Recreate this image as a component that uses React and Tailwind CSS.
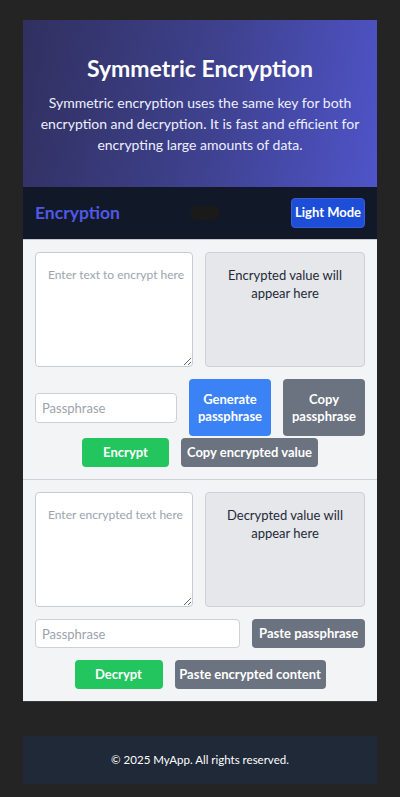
import React from "react";

const font = { fontFamily: 'Lato, "Noto Sans", sans-serif' };

export default function App() {
  return (
    <div className="min-h-screen bg-[#242424] px-[23px] pt-5 pb-[13px] flex flex-col" style={font}>
      <header className="bg-[linear-gradient(100deg,#30305f_0%,#3f4290_55%,#4f54c9_100%)] h-[167px] flex flex-col items-center justify-center px-3 text-center">
        <h1 className="text-[23px] leading-[30px] font-bold text-white">Symmetric Encryption</h1>
        <p className="mt-[9px] text-[14px] leading-[21px] text-[#eef0ff]">
          Symmetric encryption uses the same key for both encryption and decryption. It is fast and efficient for encrypting large amounts of data.
        </p>
      </header>

      <nav className="bg-[#111827] h-[52px] flex items-center justify-between px-3">
        <span className="text-[17.5px] font-bold text-[#5058e6]">Encryption</span>
        <div className="w-[30px] h-[14px] rounded-lg bg-[#1a1a1a]"></div>
        <button className="h-[30px] w-[74px] rounded bg-[#1d4ed8] border border-[#3b5bdb] text-white text-[13px] font-bold whitespace-nowrap">Light Mode</button>
      </nav>

      <main className="bg-[#f3f4f6] border-b border-[#3a3a3a]">
        <section className="p-3 border-t border-[#c7c9d1] border-b border-b-[#cfd1d6]">
          <div className="grid grid-cols-[158px_160px] gap-3">
            <textarea
              className="h-[115px] bg-white border border-[#c9cbd2] rounded pl-3 pr-1 py-3 text-[12px] leading-[20px] resize-y placeholder:text-[#9ca3af] outline-none"
              placeholder="Enter text to encrypt here"
            />
            <div className="h-[115px] bg-[#e5e7eb] border border-[#cdd0d6] rounded px-3 pt-[13px] text-center text-[13px] leading-[18px] text-[#1f2937]">
              Encrypted value will appear here
            </div>
          </div>
          <div className="mt-3 flex items-center gap-3">
            <input
              className="w-[142px] h-[30px] bg-white border border-[#cdd0d6] rounded px-[6px] text-[13px] placeholder:text-[#9ca3af] outline-none"
              placeholder="Passphrase"
            />
            <button className="w-[82px] h-[57px] rounded bg-[#3b82f6] text-white text-[13px] leading-[17px] font-bold">Generate passphrase</button>
            <button className="w-[82px] h-[57px] rounded bg-[#6b7280] text-white text-[13px] leading-[17px] font-bold">Copy passphrase</button>
          </div>
          <div className="mt-[2px] flex justify-center gap-3">
            <button className="w-[87px] h-[29px] rounded bg-[#22c55e] text-white text-[13px] font-bold">Encrypt</button>
            <button className="w-[137px] h-[29px] rounded bg-[#6b7280] text-white text-[13px] font-bold whitespace-nowrap">Copy encrypted value</button>
          </div>
        </section>

        <section className="p-3">
          <div className="grid grid-cols-[158px_160px] gap-3">
            <textarea
              className="h-[115px] bg-white border border-[#c9cbd2] rounded pl-3 pr-1 py-3 text-[12px] leading-[20px] resize-y placeholder:text-[#9ca3af] outline-none"
              placeholder="Enter encrypted text here"
            />
            <div className="h-[115px] bg-[#e5e7eb] border border-[#cdd0d6] rounded px-3 pt-[13px] text-center text-[13px] leading-[18px] text-[#1f2937]">
              Decrypted value will appear here
            </div>
          </div>
          <div className="mt-3 flex items-center gap-3">
            <input
              className="w-[206px] h-[29px] bg-white border border-[#cdd0d6] rounded px-[6px] text-[13px] placeholder:text-[#9ca3af] outline-none"
              placeholder="Passphrase"
            />
            <button className="w-[113px] h-[29px] rounded bg-[#6b7280] text-white text-[13px] font-bold whitespace-nowrap">Paste passphrase</button>
          </div>
          <div className="mt-3 flex justify-center gap-3">
            <button className="w-[88px] h-[29px] rounded bg-[#22c55e] text-white text-[13px] font-bold">Decrypt</button>
            <button className="w-[151px] h-[29px] rounded bg-[#6b7280] text-white text-[13px] font-bold whitespace-nowrap">Paste encrypted content</button>
          </div>
        </section>
      </main>

      <footer className="mt-[34px] h-[48px] bg-[#1f2937] flex items-center justify-center">
        <p className="text-[11.5px] text-white">© 2025 MyApp. All rights reserved.</p>
      </footer>
    </div>
  );
}
